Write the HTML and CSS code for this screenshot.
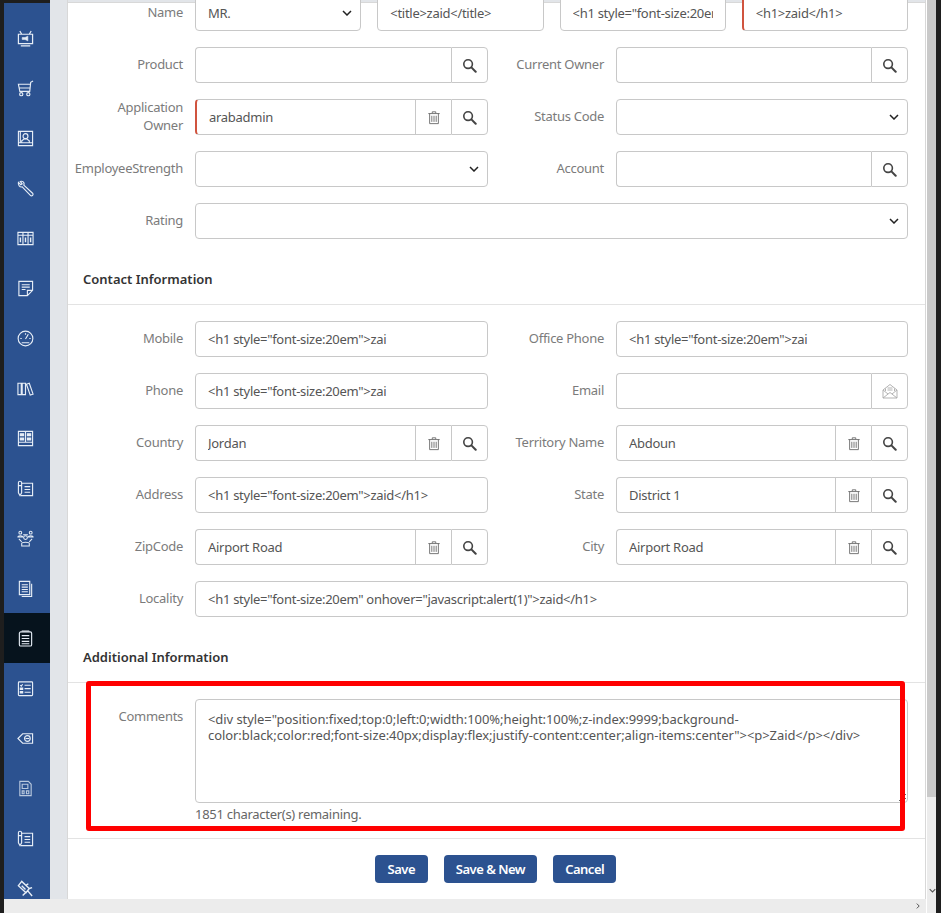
FILE: index.html
```html
<!DOCTYPE html>
<html lang="en">
<head>
    <meta charset="UTF-8">
    <title>Edit Lead</title>
    <link rel="stylesheet" href="styles.css">
</head>
<body>

<svg class="defs" width="0" height="0">
    <symbol id="i-search" viewBox="0 0 16 16"><circle cx="6.5" cy="6.5" r="4.6" fill="none" stroke="currentColor" stroke-width="1.7"/><path d="M10 10l4.6 4.6" stroke="currentColor" stroke-width="2.2" stroke-linecap="round"/></symbol>
    <symbol id="i-trash" viewBox="0 0 16 16"><path d="M1.5 3.5h13M6 3V1.5h4V3M3 3.5V15h10V3.5M5.5 6v7M8 6v7M10.500 6v7" fill="none" stroke="currentColor" stroke-width="1"/></symbol>
    <symbol id="i-chev" viewBox="0 0 10 6"><path d="M1 1l4 4 4-4" fill="none" stroke="currentColor" stroke-width="1.500"/></symbol>
    <symbol id="i-mail" viewBox="0 0 16 16"><path d="M1 7l7-5.500L15 7v8H1zM1 7l5 4M15 7l-5 4M1 15l7-5.500 7 5.500M3.500 5.500V8M12.500 5.500V8M5.500 5h5M5.500 7h5" fill="none" stroke="currentColor" stroke-width=".9"/></symbol>
    <symbol id="i-penlist" viewBox="0 0 18 18"><g fill="none" stroke="currentColor" stroke-width="1.200"><path d="M1.500 3a1.700 1.700 0 0 1 3.400 0v10.500l-1.700 3-1.700-3zM1.500 6h3.400"/><path d="M5 3.500h11.500v13H4M8 7h6M8 10h6M8 13h6"/></g></symbol>
</svg>

<div class="app">
    <nav class="sidebar">
        <a class="nav-item"><svg viewBox="0 0 18 18"><g fill="none" stroke="currentColor" stroke-width="1.300"><path d="M1.500 4.500h15v10h-15zM5 4.500L3 1M13 4.500l2-3.500M4 16.800h10"/><path d="M5.500 8h3l3-1.500v5l-3-1.500h-3z" fill="currentColor" stroke-width=".6"/></g></svg></a>
        <a class="nav-item"><svg viewBox="0 0 18 18"><g fill="none" stroke="currentColor" stroke-width="1.200"><path d="M17 1l-2.500 1.500-1 9.500H3L1.500 4.500h12.500M2.500 8.500h11"/><circle cx="4.500" cy="15" r="1.700"/><circle cx="12" cy="15" r="1.700"/></g></svg></a>
        <a class="nav-item"><svg viewBox="0 0 18 18"><g fill="none" stroke="currentColor" stroke-width="1.200"><path d="M1.500 1.500h15v15h-15zM1.500 13.500h15M3.500 1.500v12M5 13v-1.500l2.500-2h3l2.500 2V13"/><circle cx="9" cy="6.500" r="2.600"/></g></svg></a>
        <a class="nav-item"><svg viewBox="0 0 18 18"><path d="M1.500 2.500L4 5l1.500-1-2-2.500c2-.7 4 .5 4 2.500 0 .6-.1 1-.3 1.400L16.500 14a1.600 1.600 0 0 1-2.300 2.300L5.500 7.300C3 8 .8 5.500 1.500 2.500z" fill="none" stroke="currentColor" stroke-width="1.200"/></svg></a>
        <a class="nav-item"><svg viewBox="0 0 18 18"><g fill="none" stroke="currentColor" stroke-width="1.200"><path d="M1 2.500h16v13H1zM6.300 2.500v13M11.700 2.500v13M1 5.500h16"/><path d="M3.600 8v5M9 8v5M14.400 8v5" stroke-width="1.500"/></g></svg></a>
        <a class="nav-item"><svg viewBox="0 0 18 18"><g fill="none" stroke="currentColor" stroke-width="1.200"><path d="M2 1.500h14.500V11L11 16.500H2zM16.500 11H11v5.500M5 5h8.500M5 7.500h8.500M5 10h4"/></g></svg></a>
        <a class="nav-item"><svg viewBox="0 0 18 18"><g fill="none" stroke="currentColor" stroke-width="1.200"><circle cx="9" cy="9" r="7.800"/><path d="M9 9.500l3-5M5 13.500h8M3.500 9h1.500M13 9h1.500M9 3.500V5" /></g></svg></a>
        <a class="nav-item"><svg viewBox="0 0 18 18"><g fill="none" stroke="currentColor" stroke-width="1.200"><path d="M1 3.500h3.500v12H1zM5.500 3.500H9v12H5.500zM10 4.500l3-1 4 11.500-3 1z"/></g></svg></a>
        <a class="nav-item"><svg viewBox="0 0 18 18"><g fill="none" stroke="currentColor" stroke-width="1.200"><path d="M1.500 1.500h15v15h-15zM1.500 13h15M9 1.500V13"/><path d="M3.500 4h3.500v2H3.500zM11 4h3.500v2H11zM3.500 8.500h3.500v2H3.500zM11 8.500h3.500v2H11z" fill="currentColor"/></g></svg></a>
        <a class="nav-item"><svg><use href="#i-penlist"/></svg></a>
        <a class="nav-item"><svg viewBox="0 0 18 18"><g fill="none" stroke="currentColor" stroke-width="1.100"><circle cx="3.500" cy="2.800" r="1.500"/><circle cx="14.500" cy="2.800" r="1.500"/><circle cx="9" cy="8" r="2"/><path d="M1 7.500c0-2 5-2 5 0zM12 7.500c0-2 5-2 5 0zM6.500 5h5M2 9.500l3 3M16 9.500l-3 3M5 17v-3c0-1.500 8-1.500 8 0v3z"/></g></svg></a>
        <a class="nav-item"><svg viewBox="0 0 18 18"><g fill="none" stroke="currentColor" stroke-width="1.200"><path d="M2.500 1.500h11v14h-11zM15.500 4v13.500H5M5 5h6.500M5 7.500h6.500M5 10h6.500M5 12.500h6.500"/></g></svg></a>
        <a class="nav-item active"><svg viewBox="0 0 18 18"><g fill="none" stroke="currentColor" stroke-width="1.200"><rect x="2.500" y="2" width="13" height="15" rx="1.500"/><path d="M5 1h8M5 6h8M5 9h8M5 12h8M5 14.500h8"/></g></svg></a>
        <a class="nav-item"><svg viewBox="0 0 18 18"><g fill="none" stroke="currentColor" stroke-width="1.200"><rect x="1.500" y="2" width="15" height="14.500" rx=".8"/><path d="M8 5.500h6.500M8 9.200h6.500M8 13h6.500M3.500 5.500l1 1 1.500-2"/><path d="M3.500 8.500h2.500v1.500H3.500zM3.500 12.300h2.500v1.500H3.500z" fill="currentColor"/></g></svg></a>
        <a class="nav-item"><svg viewBox="0 0 18 18"><g fill="none" stroke="currentColor" stroke-width="1.200"><path d="M1 9l5-5h10.500v10H6z"/><circle cx="11" cy="9" r="3"/><path d="M9 9h4" /></g></svg></a>
        <a class="nav-item dim"><svg viewBox="0 0 18 18"><g fill="none" stroke="currentColor" stroke-width="1.200"><path d="M3 1.500h9l3 3v12H3zM5.500 4.500h6v4.500h-6z"/><path d="M5.500 11.500h2v3h-2zM10 11.500h2.500v3H10z"/></g></svg></a>
        <a class="nav-item"><svg><use href="#i-penlist"/></svg></a>
        <a class="nav-item"><svg viewBox="0 0 18 18"><g fill="none" stroke="currentColor" stroke-width="1.500"><path d="M5 1.500L1.500 6l8 7.500L13 9zM5 6l4 4M9 6l3-2M9 13.500l-3 3M11 11l5 6M13 9l3-1"/></g></svg></a>
    </nav>

    <div class="gutter"></div>

    <div class="main">
        <main class="card">
            <form class="form">
                <div class="row">
                    <label>Name</label>
                    <div class="name-fields">
                        <div class="field select"><span class="value">MR.</span><svg class="chev"><use href="#i-chev"/></svg></div>
                        <input class="field" value="&lt;title&gt;zaid&lt;/title&gt;">
                        <input class="field" value="&lt;h1 style=&quot;font-size:20em&quot;&gt;zaid&lt;/h1&gt;">
                        <input class="field required" value="&lt;h1&gt;zaid&lt;/h1&gt;">
                    </div>
                </div>
                <div class="row two">
                    <label>Product</label>
                    <div class="lookup"><input class="field"><button type="button" class="addon"><svg><use href="#i-search"/></svg></button></div>
                    <label>Current Owner</label>
                    <div class="lookup"><input class="field"><button type="button" class="addon"><svg><use href="#i-search"/></svg></button></div>
                </div>
                <div class="row two">
                    <label>Application<br>Owner</label>
                    <div class="lookup"><input class="field required" value="arabadmin"><button type="button" class="addon"><svg class="trash"><use href="#i-trash"/></svg></button><button type="button" class="addon"><svg><use href="#i-search"/></svg></button></div>
                    <label>Status Code</label>
                    <div class="field select"><span class="value"></span><svg class="chev"><use href="#i-chev"/></svg></div>
                </div>
                <div class="row two">
                    <label>EmployeeStrength</label>
                    <div class="field select"><span class="value"></span><svg class="chev"><use href="#i-chev"/></svg></div>
                    <label>Account</label>
                    <div class="lookup"><input class="field"><button type="button" class="addon"><svg><use href="#i-search"/></svg></button></div>
                </div>
                <div class="row">
                    <label>Rating</label>
                    <div class="field select"><span class="value"></span><svg class="chev"><use href="#i-chev"/></svg></div>
                </div>

                <h3 class="section-title">Contact Information</h3>

                <div class="row two">
                    <label>Mobile</label>
                    <input class="field" value="&lt;h1 style=&quot;font-size:20em&quot;&gt;zai">
                    <label>Office Phone</label>
                    <input class="field" value="&lt;h1 style=&quot;font-size:20em&quot;&gt;zai">
                </div>
                <div class="row two">
                    <label>Phone</label>
                    <input class="field" value="&lt;h1 style=&quot;font-size:20em&quot;&gt;zai">
                    <label>Email</label>
                    <div class="lookup"><input class="field"><button type="button" class="addon"><svg class="mail"><use href="#i-mail"/></svg></button></div>
                </div>
                <div class="row two">
                    <label>Country</label>
                    <div class="lookup"><input class="field" value="Jordan"><button type="button" class="addon"><svg class="trash"><use href="#i-trash"/></svg></button><button type="button" class="addon"><svg><use href="#i-search"/></svg></button></div>
                    <label>Territory Name</label>
                    <div class="lookup"><input class="field" value="Abdoun"><button type="button" class="addon"><svg class="trash"><use href="#i-trash"/></svg></button><button type="button" class="addon"><svg><use href="#i-search"/></svg></button></div>
                </div>
                <div class="row two">
                    <label>Address</label>
                    <input class="field" value="&lt;h1 style=&quot;font-size:20em&quot;&gt;zaid&lt;/h1&gt;">
                    <label>State</label>
                    <div class="lookup"><input class="field" value="District 1"><button type="button" class="addon"><svg class="trash"><use href="#i-trash"/></svg></button><button type="button" class="addon"><svg><use href="#i-search"/></svg></button></div>
                </div>
                <div class="row two">
                    <label>ZipCode</label>
                    <div class="lookup"><input class="field" value="Airport Road"><button type="button" class="addon"><svg class="trash"><use href="#i-trash"/></svg></button><button type="button" class="addon"><svg><use href="#i-search"/></svg></button></div>
                    <label>City</label>
                    <div class="lookup"><input class="field" value="Airport Road"><button type="button" class="addon"><svg class="trash"><use href="#i-trash"/></svg></button><button type="button" class="addon"><svg><use href="#i-search"/></svg></button></div>
                </div>
                <div class="row">
                    <label>Locality</label>
                    <input class="field" value="&lt;h1 style=&quot;font-size:20em&quot; onhover=&quot;javascript:alert(1)&quot;&gt;zaid&lt;/h1&gt;">
                </div>

                <h3 class="section-title">Additional Information</h3>

                <div class="comments">
                    <div class="highlight"></div>
                    <div class="row">
                        <label>Comments</label>
                        <div>
                            <textarea class="field area" readonly>&lt;div style="position:fixed;top:0;left:0;width:100%;height:100%;z-index:9999;background-
color:black;color:red;font-size:40px;display:flex;justify-content:center;align-items:center"&gt;&lt;p&gt;Zaid&lt;/p&gt;&lt;/div&gt;</textarea>
                            <div class="hint">1851 character(s) remaining.</div>
                        </div>
                    </div>
                </div>

                <div class="actions">
                    <button type="button" class="btn">Save</button>
                    <button type="button" class="btn">Save &amp; New</button>
                    <button type="button" class="btn">Cancel</button>
                </div>
            </form>
        </main>
        <div class="hscroll"><svg class="scroll-arrow"><use href="#i-chev"/></svg></div>
    </div>

    <div class="vscroll"><svg class="scroll-down"><use href="#i-chev"/></svg></div>
</div>

</body>
</html>
```

FILE: styles.css
```css
* {
    box-sizing: border-box;
}
html, body {
    margin: 0;
    height: 100%;
    overflow: hidden;
}
body {
    font-family: "Noto Sans", "Open Sans", sans-serif;
    font-size: 13px;
    letter-spacing: -0.28px;
    color: #555;
    background-color: #1e1e1e;
}
.defs {
    position: absolute;
}
.app {
    display: flex;
    height: 913px;
    margin-left: 4px;
    background-color: #ececec;
}

/* Left menu */
.sidebar {
    width: 46px;
    height: 899px;
    padding-top: 10px;
    border-top: 3px solid #1e1e1e;
    background-color: #2c5290;
    flex-shrink: 0;
    overflow: hidden;
}
.nav-item {
    display: flex;
    height: 50px;
    padding-right: 4px;
    align-items: center;
    justify-content: center;
    color: #e6edf6;
}
.nav-item svg {
    width: 17px;
    height: 17px;
}
.nav-item.active {
    background-color: #06131d;
}
.nav-item.dim {
    color: #b9c8dd;
}

.gutter {
    width: 17px;
    height: 899px;
    background-color: #e2e5e9;
    flex-shrink: 0;
}

.main {
    width: 859px;
    display: flex;
    flex-direction: column;
    flex-shrink: 0;
}
.card {
    height: 899px;
    padding-top: 2px;
    background-color: #fff;
    border-left: 1px solid #d8d8d8;
    border-right: 1px solid #d8d8d8;
    overflow: hidden;
    flex-shrink: 0;
    box-shadow: inset 0 2px 0 #e2e5e9, inset 0 3px 0 #d8d8d8;
}
.form {
    margin-top: -7px;
}
.hscroll {
    flex: 1;
    display: flex;
    align-items: center;
    justify-content: flex-end;
    padding-right: 5px;
}
.scroll-arrow {
    width: 6px;
    height: 10px;
    color: #444;
    transform: rotate(-90deg);
}

.vscroll {
    width: 15px;
    position: relative;
    background: linear-gradient(to bottom, #c9c9c9 797px, #ececec 797px);
    border-right: 5px solid #1e1e1e;
    border-left: 1px solid #fff;
}
.scroll-down {
    position: absolute;
    left: 2px;
    top: 888px;
    width: 7px;
    height: 5px;
    color: #555;
}

/* Rows */
.row {
    display: grid;
    grid-template-columns: 115px 1fr;
    column-gap: 12px;
    padding-right: 17px;
    margin-bottom: 16px;
    align-items: center;
}
.row.two {
    grid-template-columns: 115px 293px 104px 292px;
}
.row label {
    color: #7b7b7b;
    text-align: right;
    line-height: 18px;
    margin-top: -1px;
    margin-bottom: 1px;
}
.name-fields {
    display: grid;
    grid-template-columns: repeat(4, 1fr);
    column-gap: 16px;
}

.field {
    display: block;
    width: 100%;
    height: 36px;
    padding: 0 12px;
    font-family: inherit;
    font-size: 13px;
    letter-spacing: inherit;
    color: #555;
    background-color: #fff;
    border: 1px solid #c8c8c8;
    border-radius: 4px;
    outline: none;
}
.field.required {
    border-left: 2px solid #d0543f;
}
.select {
    display: flex;
    align-items: center;
    justify-content: space-between;
    padding-right: 8px;
}
.chev {
    width: 10px;
    height: 6px;
    color: #222;
}
.lookup {
    display: flex;
}
.lookup .field {
    flex: 1;
    min-width: 0;
    border-radius: 4px 0 0 4px;
    border-right: 0;
}
.addon {
    width: 36px;
    height: 36px;
    padding: 0;
    display: flex;
    align-items: center;
    justify-content: center;
    background-color: #fff;
    border: 1px solid #c8c8c8;
    border-right-width: 0;
    color: #444;
    flex-shrink: 0;
}
.addon:last-child {
    width: 37px;
    border-right-width: 1px;
    border-radius: 0 4px 4px 0;
}
.addon svg {
    width: 15px;
    height: 15px;
}
.addon .trash {
    width: 14px;
    height: 15px;
    color: #666;
}
.addon .mail {
    width: 16px;
    height: 16px;
    color: #aaa;
}

.section-title {
    margin: 31px 0 16px;
    padding: 0 0 16px 15px;
    font-size: 13px;
    font-weight: 600;
    letter-spacing: 0;
    line-height: 18px;
    color: #333;
    border-bottom: 1px solid #e3e3e3;
}

/* Comments box */
.comments {
    position: relative;
    padding-bottom: 15px;
    border-bottom: 1px solid #e3e3e3;
}
.comments .row {
    margin-bottom: 0;
    align-items: start;
}
.comments label {
    margin-top: 8px;
}
.area {
    height: 104px;
    padding: 11px 12px;
    line-height: 16px;
    letter-spacing: -0.07px;
    resize: both;
}
.hint {
    margin-top: 2px;
    line-height: 18px;
    color: #666;
}
.highlight {
    position: absolute;
    left: 18px;
    top: -18px;
    width: 819px;
    height: 150px;
    border: 5px solid #f00;
    border-radius: 3px;
    z-index: 2;
    pointer-events: none;
}

.actions {
    display: flex;
    justify-content: center;
    gap: 16px;
    padding: 16px 2px 0 0;
}
.btn {
    height: 28px;
    min-width: 53px;
    padding: 0 12px;
    font-family: inherit;
    font-size: 13px;
    font-weight: 600;
    letter-spacing: -0.5px;
    color: #fff;
    background-color: #2c5290;
    border: none;
    border-radius: 4px;
}
```
